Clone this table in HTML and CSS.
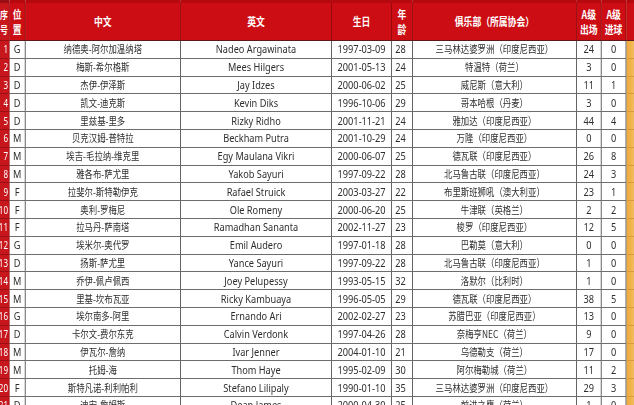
FILE: index.html
```html
<!DOCTYPE html>
<html lang="zh">
<head>
<meta charset="utf-8">
<title>印度尼西亚国家队名单</title>
<link rel="stylesheet" href="styles.css">
</head>
<body>
<div class="sheet">
<table class="roster">
<colgroup>
<col class="c-no"><col class="c-pos"><col class="c-cn"><col class="c-en"><col class="c-dob"><col class="c-age"><col class="c-club"><col class="c-caps"><col class="c-goals"><col class="c-extra">
</colgroup>
<thead>
<tr>
<th class="no">序<br>号</th>
<th class="stack">位<br>置</th>
<th>中文</th>
<th>英文</th>
<th>生日</th>
<th class="stack">年<br>龄</th>
<th>俱乐部（所属协会）</th>
<th class="stack">A级<br>出场</th>
<th class="stack">A级<br>进球</th>
<th class="extra"></th>
</tr>
</thead>
<tbody>
<tr><td class="no">1</td><td>G</td><td class="cn">纳德奥-阿尔加温纳塔</td><td>Nadeo Argawinata</td><td>1997-03-09</td><td class="age">28</td><td class="cn">三马林达婆罗洲（印度尼西亚）</td><td>24</td><td>0</td><td class="extra"></td></tr>
<tr><td class="no">2</td><td>D</td><td class="cn">梅斯-希尔格斯</td><td>Mees Hilgers</td><td>2001-05-13</td><td class="age">24</td><td class="cn">特温特（荷兰）</td><td>3</td><td>0</td><td class="extra"></td></tr>
<tr><td class="no">3</td><td>D</td><td class="cn">杰伊-伊泽斯</td><td>Jay Idzes</td><td>2000-06-02</td><td class="age">25</td><td class="cn">威尼斯（意大利）</td><td>11</td><td>1</td><td class="extra"></td></tr>
<tr><td class="no">4</td><td>D</td><td class="cn">凯文-迪克斯</td><td>Kevin Diks</td><td>1996-10-06</td><td class="age">29</td><td class="cn">哥本哈根（丹麦）</td><td>3</td><td>0</td><td class="extra"></td></tr>
<tr><td class="no">5</td><td>D</td><td class="cn">里兹基-里多</td><td>Rizky Ridho</td><td>2001-11-21</td><td class="age">24</td><td class="cn">雅加达（印度尼西亚）</td><td>44</td><td>4</td><td class="extra"></td></tr>
<tr><td class="no">6</td><td>M</td><td class="cn">贝克汉姆-普特拉</td><td>Beckham Putra</td><td>2001-10-29</td><td class="age">24</td><td class="cn">万隆（印度尼西亚）</td><td>0</td><td>0</td><td class="extra"></td></tr>
<tr><td class="no">7</td><td>M</td><td class="cn">埃吉-毛拉纳-维克里</td><td>Egy Maulana Vikri</td><td>2000-06-07</td><td class="age">25</td><td class="cn">德瓦联（印度尼西亚）</td><td>26</td><td>8</td><td class="extra"></td></tr>
<tr><td class="no">8</td><td>M</td><td class="cn">雅各布-萨尤里</td><td>Yakob Sayuri</td><td>1997-09-22</td><td class="age">28</td><td class="cn">北马鲁古联（印度尼西亚）</td><td>24</td><td>3</td><td class="extra"></td></tr>
<tr><td class="no">9</td><td>F</td><td class="cn">拉斐尔-斯特勒伊克</td><td>Rafael Struick</td><td>2003-03-27</td><td class="age">22</td><td class="cn">布里斯班狮吼（澳大利亚）</td><td>23</td><td>1</td><td class="extra"></td></tr>
<tr><td class="no">10</td><td>F</td><td class="cn">奥利-罗梅尼</td><td>Ole Romeny</td><td>2000-06-20</td><td class="age">25</td><td class="cn">牛津联（英格兰）</td><td>2</td><td>2</td><td class="extra"></td></tr>
<tr><td class="no">11</td><td>F</td><td class="cn">拉马丹-萨南塔</td><td>Ramadhan Sananta</td><td>2002-11-27</td><td class="age">23</td><td class="cn">梭罗（印度尼西亚）</td><td>12</td><td>5</td><td class="extra"></td></tr>
<tr><td class="no">12</td><td>G</td><td class="cn">埃米尔-奥代罗</td><td>Emil Audero</td><td>1997-01-18</td><td class="age">28</td><td class="cn">巴勒莫（意大利）</td><td>0</td><td>0</td><td class="extra"></td></tr>
<tr><td class="no">13</td><td>D</td><td class="cn">扬斯-萨尤里</td><td>Yance Sayuri</td><td>1997-09-22</td><td class="age">28</td><td class="cn">北马鲁古联（印度尼西亚）</td><td>1</td><td>0</td><td class="extra"></td></tr>
<tr><td class="no">14</td><td>M</td><td class="cn">乔伊-佩卢佩西</td><td>Joey Pelupessy</td><td>1993-05-15</td><td class="age">32</td><td class="cn">洛默尔（比利时）</td><td>1</td><td>0</td><td class="extra"></td></tr>
<tr><td class="no">15</td><td>M</td><td class="cn">里基-坎布瓦亚</td><td>Ricky Kambuaya</td><td>1996-05-05</td><td class="age">29</td><td class="cn">德瓦联（印度尼西亚）</td><td>38</td><td>5</td><td class="extra"></td></tr>
<tr><td class="no">16</td><td>G</td><td class="cn">埃尔南多-阿里</td><td>Ernando Ari</td><td>2002-02-27</td><td class="age">23</td><td class="cn">苏腊巴亚（印度尼西亚）</td><td>13</td><td>0</td><td class="extra"></td></tr>
<tr><td class="no">17</td><td>D</td><td class="cn">卡尔文-费尔东克</td><td>Calvin Verdonk</td><td>1997-04-26</td><td class="age">28</td><td class="cn">奈梅亨NEC（荷兰）</td><td>9</td><td>0</td><td class="extra"></td></tr>
<tr><td class="no">18</td><td>M</td><td class="cn">伊瓦尔-詹纳</td><td>Ivar Jenner</td><td>2004-01-10</td><td class="age">21</td><td class="cn">乌德勒支（荷兰）</td><td>17</td><td>0</td><td class="extra"></td></tr>
<tr><td class="no">19</td><td>M</td><td class="cn">托姆-海</td><td>Thom Haye</td><td>1995-02-09</td><td class="age">30</td><td class="cn">阿尔梅勒城（荷兰）</td><td>11</td><td>2</td><td class="extra"></td></tr>
<tr><td class="no">20</td><td>F</td><td class="cn">斯特凡诺-利利帕利</td><td>Stefano Lilipaly</td><td>1990-01-10</td><td class="age">35</td><td class="cn">三马林达婆罗洲（印度尼西亚）</td><td>29</td><td>3</td><td class="extra"></td></tr>
<tr><td class="no">21</td><td>D</td><td class="cn">迪安-詹姆斯</td><td>Dean James</td><td>2000-04-30</td><td class="age">25</td><td class="cn">前进之鹰（荷兰）</td><td>1</td><td>0</td><td class="extra"></td></tr>
</tbody>
</table>
</div>
</body>
</html>
```

FILE: styles.css
```css
html, body {
  margin: 0;
  padding: 0;
  width: 634px;
  height: 405px;
  overflow: hidden;
  background: #ffffff;
}

.sheet {
  width: 800px;
  transform: scaleX(0.8);
  transform-origin: 0 0;
}

.roster {
  margin-left: -19px;
  border-collapse: collapse;
  table-layout: fixed;
  width: 820px;
  font-family: "Noto Sans", "Noto Sans CJK SC", sans-serif;
  font-size: 11.5px;
  color: #2e2e2e;
}

.c-no { width: 30px; }
.c-pos { width: 20px; }
.c-cn { width: 194px; }
.c-en { width: 189px; }
.c-dob { width: 75px; }
.c-age { width: 26px; }
.c-club { width: 205px; }
.c-caps { width: 31px; }
.c-goals { width: 31px; }
.c-extra { width: 19px; }

.roster th {
  height: 37px;
  padding: 0;
  background: #cc0e14;
  color: #ffffff;
  font-family: "Noto Sans CJK SC", sans-serif;
  font-weight: 700;
  font-size: 11px;
  line-height: 15px;
  text-align: center;
  border-left: 1px solid #8e0a0c;
  border-right: 1px solid #8e0a0c;
  border-top: 3px solid #b5090f;
  border-bottom: 1px solid #5a1a1a;
}

.roster td {
  height: 16.8px;
  padding: 0;
  line-height: 16px;
  text-align: center;
  white-space: nowrap;
  overflow: hidden;
  border: 1px solid #6d6d6d;
  border-left-color: #3e3e3e;
  border-right-color: #3e3e3e;
}

.roster td.cn {
  font-family: "Noto Sans CJK SC", sans-serif;
  font-size: 10.5px;
}

.roster td.age {
  text-align: left;
  padding-left: 4px;
}

.roster .no {
  background: #c8161d;
  color: #ffffff;
  text-align: right;
  padding-right: 1px;
  border-color: #9a0f14;
  font-size: 10px;
}

.roster td.extra {
  background: linear-gradient(90deg, #efa93a, #f6cf7e);
  border-color: #d79a40;
}
```
